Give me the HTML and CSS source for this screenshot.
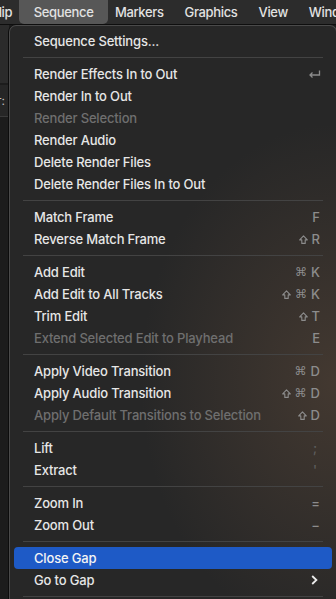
FILE: index.html
```html
<!DOCTYPE html>
<html lang="en">
<head>
  <meta charset="UTF-8" />
  <title>Sequence menu</title>
  <link rel="stylesheet" href="styles.css">
</head>
<body>
  <div class="menubar">
    <div class="bar-item first">Clip</div>
    <div class="bar-item active">Sequence</div>
    <div class="bar-item">Markers</div>
    <div class="bar-item">Graphics</div>
    <div class="bar-item">View</div>
    <div class="bar-item">Window</div>
  </div>

  <div class="workspace">
    <div class="side">
      <div class="side-top"></div>
      <div class="side-field">r:</div>
      <div class="side-rest"></div>
    </div>

    <div class="menu">
      <div class="row"><span>Sequence Settings...</span></div>
      <div class="sep"></div>

      <div class="row"><span>Render Effects In to Out</span>
        <span class="key">
          <svg class="ret" width="13" height="9" viewBox="0 0 13 9"><path d="M11.5 0.5 V5 H2 M4.5 2.5 L2 5 L4.5 7.5" fill="none" stroke="#8c8c8c" stroke-width="1.3"/></svg>
        </span>
      </div>
      <div class="row"><span>Render In to Out</span></div>
      <div class="row off"><span>Render Selection</span></div>
      <div class="row"><span>Render Audio</span></div>
      <div class="row"><span>Delete Render Files</span></div>
      <div class="row"><span>Delete Render Files In to Out</span></div>
      <div class="sep"></div>

      <div class="row"><span>Match Frame</span><span class="key">F</span></div>
      <div class="row"><span>Reverse Match Frame</span>
        <span class="key"><svg class="shift" width="9" height="9" viewBox="0 0 9 9"><path d="M4.5 0.8 L8.3 4.9 H6.2 V8.4 H2.8 V4.9 H0.7 Z" fill="none" stroke="#8c8c8c" stroke-width="1.1" stroke-linejoin="round"/></svg>R</span>
      </div>
      <div class="sep"></div>

      <div class="row"><span>Add Edit</span><span class="key"><i>⌘</i>K</span></div>
      <div class="row"><span>Add Edit to All Tracks</span>
        <span class="key"><svg class="shift" width="9" height="9" viewBox="0 0 9 9"><path d="M4.5 0.8 L8.3 4.9 H6.2 V8.4 H2.8 V4.9 H0.7 Z" fill="none" stroke="#8c8c8c" stroke-width="1.1" stroke-linejoin="round"/></svg><i>⌘</i>K</span>
      </div>
      <div class="row"><span>Trim Edit</span>
        <span class="key"><svg class="shift" width="9" height="9" viewBox="0 0 9 9"><path d="M4.5 0.8 L8.3 4.9 H6.2 V8.4 H2.8 V4.9 H0.7 Z" fill="none" stroke="#8c8c8c" stroke-width="1.1" stroke-linejoin="round"/></svg>T</span>
      </div>
      <div class="row off"><span>Extend Selected Edit to Playhead</span><span class="key">E</span></div>
      <div class="sep"></div>

      <div class="row"><span>Apply Video Transition</span><span class="key"><i>⌘</i>D</span></div>
      <div class="row"><span>Apply Audio Transition</span>
        <span class="key"><svg class="shift" width="9" height="9" viewBox="0 0 9 9"><path d="M4.5 0.8 L8.3 4.9 H6.2 V8.4 H2.8 V4.9 H0.7 Z" fill="none" stroke="#8c8c8c" stroke-width="1.1" stroke-linejoin="round"/></svg><i>⌘</i>D</span>
      </div>
      <div class="row off"><span>Apply Default Transitions to Selection</span>
        <span class="key"><svg class="shift" width="9" height="9" viewBox="0 0 9 9"><path d="M4.5 0.8 L8.3 4.9 H6.2 V8.4 H2.8 V4.9 H0.7 Z" fill="none" stroke="#8c8c8c" stroke-width="1.1" stroke-linejoin="round"/></svg>D</span>
      </div>
      <div class="sep"></div>

      <div class="row"><span>Lift</span><span class="key faint">;</span></div>
      <div class="row"><span>Extract</span><span class="key faint">'</span></div>
      <div class="sep"></div>

      <div class="row"><span>Zoom In</span><span class="key">=</span></div>
      <div class="row"><span>Zoom Out</span><span class="key">−</span></div>
      <div class="sep"></div>

      <div class="row selected"><span>Close Gap</span></div>
      <div class="row"><span>Go to Gap</span>
        <svg class="chev" width="7" height="10" viewBox="0 0 7 10"><path d="M1.2 1 L5.4 5 L1.2 9" fill="none" stroke="#ececec" stroke-width="1.8"/></svg>
      </div>
      <div class="sep"></div>
    </div>
  </div>
</body>
</html>
```

FILE: styles.css
```css
* {
  box-sizing: border-box;
}

html, body {
  margin: 0;
  padding: 0;
  width: 336px;
  height: 599px;
  overflow: hidden;
}

body {
  font-family: 'Inter', 'DejaVu Sans', sans-serif;
  font-size: 13px;
  background: #1b1b1b;
  color: #e4e4e4;
}

/* top menu bar */
.menubar {
  height: 25px;
  display: flex;
  align-items: stretch;
  background: #2c2c2c;
  border-bottom: 1px solid #0e0e0e;
  white-space: nowrap;
}

.bar-item {
  padding: 0 10.5px;
  display: flex;
  align-items: center;
  color: #e2e2e2;
  font-weight: 500;
  letter-spacing: -0.35px;
  height: 24px;
}

.bar-item.first {
  margin-left: -21px;
}

.bar-item.active {
  background: #575757;
  border-radius: 0 0 5px 5px;
  padding: 0 15px;
  margin: 0 -4px;
}

/* workspace behind the menu */
.workspace {
  display: flex;
  height: 574px;
}

.side {
  width: 9px;
  flex-shrink: 0;
  display: flex;
  flex-direction: column;
  background: #1a1a1a;
}

.side-top {
  height: 60px;
  background: #2b2b2b;
  border-bottom: 2px solid #1c1c1c;
}

.side-field {
  height: 32px;
  background: #262626;
  border-bottom: 1px solid #3a3a3a;
  font-size: 12px;
  color: #bdbdbd;
  padding: 8px 0 0 0;
  text-indent: -3px;
  overflow: hidden;
}

.side-rest {
  flex: 1;
  background: #1c1c1c;
}

/* drop-down */
.menu {
  width: 328px;
  flex-shrink: 0;
  padding: 4px;
  border: 1px solid #4a4a4a;
  border-bottom: none;
  border-radius: 7px 7px 0 0;
  background:
    radial-gradient(ellipse 60% 45% at 100% 62%, rgba(95, 74, 58, 0.5), rgba(95, 74, 58, 0) 100%),
    #272727;
  box-shadow: -1px 0 0 #0c0c0c;
}

.row {
  height: 22px;
  display: flex;
  align-items: center;
  justify-content: space-between;
  padding: 0 12px 0 20px;
  border-radius: 4px;
  font-weight: 500;
  letter-spacing: -0.17px;
  color: #e6e6e6;
  white-space: nowrap;
}

.row.off {
  color: #6f6f6f;
}

.row.selected {
  background: #1e5ac6;
  color: #f4f4f4;
}

.sep {
  height: 1px;
  margin: 5px 9px;
  background: #434343;
}

.key {
  color: #8c8c8c;
  display: flex;
  align-items: center;
  font-weight: 500;
  letter-spacing: 0;
}

.key i {
  font-style: normal;
  font-family: 'DejaVu Sans', sans-serif;
  font-size: 12px;
  margin-right: 4px;
}

.shift {
  display: block;
  margin-right: 4px;
}

.key.faint {
  color: #5e5e5e;
  padding-right: 3px;
}

.ret {
  display: block;
  margin-right: -1px;
}

.chev {
  display: block;
  margin-right: 2px;
}
```
